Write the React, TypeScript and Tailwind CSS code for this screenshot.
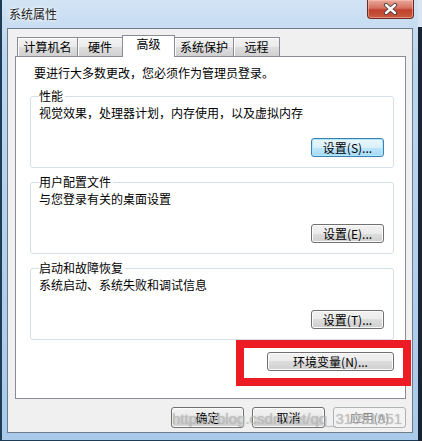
import type { ReactNode } from 'react'

// Win7 style push button
const baseBtn =
  'flex items-center justify-center rounded-[3px] border text-[12px] leading-[14px] whitespace-nowrap'
const normalBtn =
  'border-[#707070] bg-[linear-gradient(#f2f2f2,#ebebeb_50%,#dddddd_50%,#cfcfcf)] shadow-[inset_0_0_0_1px_#fcfcfc] text-black'
const focusBtn =
  'border-[#3c7fb1] bg-[linear-gradient(#eaf6fd,#d9f0fc_50%,#bee6fd_50%,#a7d9f5)] shadow-[inset_0_0_0_1px_#aee8ff] text-black'
const disabledBtn = 'border-[#adb2b5] bg-[#f4f4f4] text-[#838383]'

function Button({
  children,
  className = '',
  variant = 'normal',
}: {
  children: ReactNode
  className?: string
  variant?: 'normal' | 'focus' | 'disabled'
}) {
  const look =
    variant === 'focus' ? focusBtn : variant === 'disabled' ? disabledBtn : normalBtn
  return <button className={`${baseBtn} ${look} ${className}`}>{children}</button>
}

function Group({
  title,
  text,
  action,
  focused,
}: {
  title: string
  text: string
  action: string
  focused?: boolean
}) {
  return (
    <fieldset className="ml-[14px] mr-[11px] rounded-[3px] border border-[#d5dfe5] pb-[10px] pl-[8px] pr-[9px] pt-[3px]">
      <legend className="pr-[2px] leading-[14px]">{title}</legend>
      <p className="leading-[14px]">{text}</p>
      <div className="mt-[18px] flex justify-end">
        <Button variant={focused ? 'focus' : 'normal'} className="h-[19px] w-[73px]">
          {action}
        </Button>
      </div>
    </fieldset>
  )
}

const tabs = [
  { label: '计算机名', w: 'w-[61px]' },
  { label: '硬件', w: 'w-[46px]' },
  { label: '高级', w: 'w-[53px]', active: true },
  { label: '系统保护', w: 'w-[60px]' },
  { label: '远程', w: 'w-[47px]' },
]

function CloseIcon() {
  return (
    <svg width="15" height="12" viewBox="0 0 15 12">
      <path d="M3 2 L12 10 M12 2 L3 10" stroke="#4a3a3a" strokeWidth="4.2" strokeLinecap="round" />
      <path d="M3 2 L12 10 M12 2 L3 10" stroke="#ffffff" strokeWidth="2.4" strokeLinecap="round" />
    </svg>
  )
}

export default function App() {
  return (
    <div className="relative flex h-[441px] w-[422px] overflow-hidden font-['Noto_Sans_CJK_SC',sans-serif] text-[12px] text-black">
      {/* window frame */}
      <div className="flex h-full w-[418px] flex-col border-b border-l-2 border-[#1f3c57] bg-[linear-gradient(#d2e3f5,#bdd6ef_12%,#b2cfec_60%,#a9caea)]">
        {/* title bar */}
        <div className="flex h-[28px] items-start justify-between pl-[7px] pr-[4px]">
          <span className="pt-[7px] leading-[14px] text-[#1b1b1b] [text-shadow:0_0_6px_#ffffff,0_0_3px_#ffffff]">
            系统属性
          </span>
          <div className="flex h-[19px] w-[47px] items-center justify-center rounded-b-[4px] border border-t-0 border-[#6e2a22] bg-[linear-gradient(#e9a99b,#d4705f_45%,#c0412f_55%,#c85a3e)] shadow-[inset_0_0_0_1px_rgba(255,200,190,0.5)]">
            <CloseIcon />
          </div>
        </div>

        {/* client area */}
        <div className="ml-[5px] flex h-[405px] w-[406px] flex-col border border-[#6e7c89] bg-[#f0f0f0]">
          {/* tabs */}
          <div className="ml-[9px] flex h-[28px] items-end pt-[6px]">
            {tabs.map((t, i) =>
              t.active ? (
                <div
                  key={t.label}
                  className={`relative z-10 -ml-px h-[22px] ${t.w} border border-b-0 border-[#898c95] bg-white pt-[1px] text-center leading-[14px]`}
                >
                  {t.label}
                </div>
              ) : (
                <div
                  key={t.label}
                  className={`${i > 0 ? '-ml-px' : ''} h-[20px] ${t.w} border border-b-0 border-[#898c95] bg-[linear-gradient(#f2f2f2,#ebebeb_50%,#dddddd_50%,#cfcfcf)] pt-[2px] text-center leading-[14px] shadow-[inset_1px_1px_0_#fcfcfc]`}
                >
                  {t.label}
                </div>
              ),
            )}
          </div>

          {/* tab panel */}
          <div className="-mt-px ml-[7px] mr-[6px] h-[343px] border border-[#898c95] bg-white pt-[9px]">
            <p className="ml-[18px] leading-[14px]">要进行大多数更改，您必须作为管理员登录。</p>
            <div className="mt-[9px] flex flex-col gap-[7px]">
              <Group
                title="性能"
                text="视觉效果，处理器计划，内存使用，以及虚拟内存"
                action="设置(S)..."
                focused
              />
              <Group title="用户配置文件" text="与您登录有关的桌面设置" action="设置(E)..." />
              <Group
                title="启动和故障恢复"
                text="系统启动、系统失败和调试信息"
                action="设置(T)..."
              />
            </div>
            <div className="mr-[11px] mt-[12px] flex justify-end">
              <Button className="h-[19px] w-[127px]">环境变量(N)...</Button>
            </div>
          </div>

          {/* dialog buttons */}
          <div className="mt-[8px] flex justify-end gap-[8px] pr-[6px]">
            <Button className="h-[21px] w-[73px]">确定</Button>
            <Button className="h-[21px] w-[73px]">取消</Button>
            <Button variant="disabled" className="h-[21px] w-[73px]">
              应用(A)
            </Button>
          </div>
        </div>
      </div>

      {/* desktop strip on the right */}
      <div className="flex h-full w-[4px] flex-col">
        <div className="h-[27px] bg-[#d9e6f2]" />
        <div className="flex-1 bg-[#1a2332]" />
      </div>

      {/* red annotation box */}
      <div className="absolute left-[236px] top-[340px] h-[46px] w-[175px] border-[8px] border-[#ed1c24]" />

      {/* blog watermark */}
      <span className="absolute left-[172px] top-[410px] font-['Liberation_Sans',sans-serif] text-[15px] leading-[17px] text-[rgba(200,200,200,0.7)] [text-shadow:0_0_1px_rgba(120,120,120,0.6)]">
        https://blog.csdn.net/qq_31051951
      </span>
    </div>
  )
}
